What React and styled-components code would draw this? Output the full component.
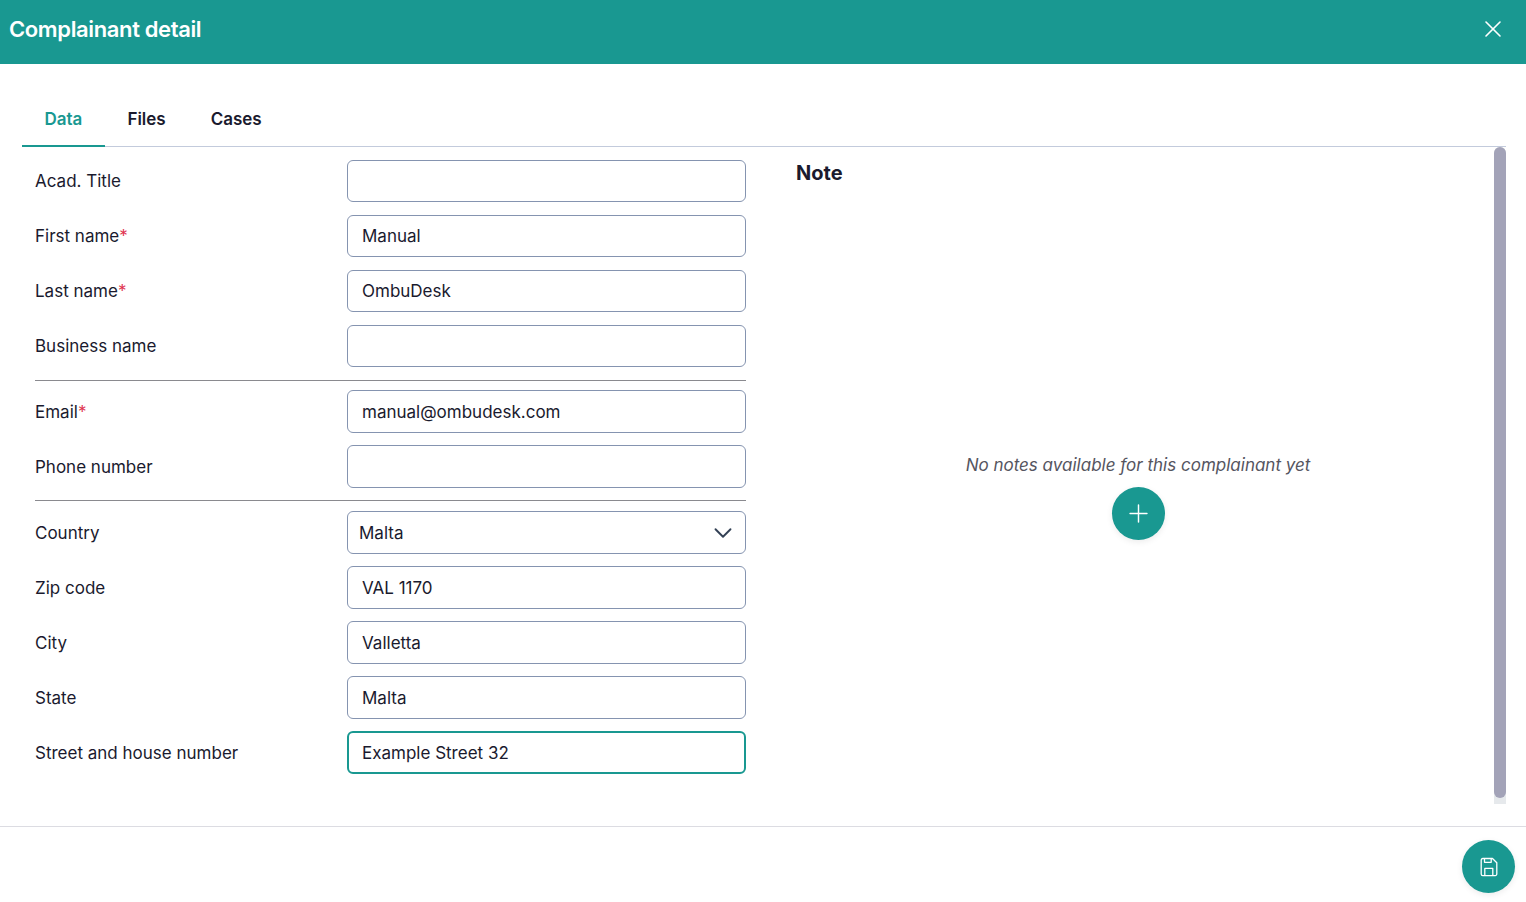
import React from "react";
import styled, { createGlobalStyle } from "styled-components";
import { X, Plus, ChevronDown } from "lucide-react";

const GlobalStyle = createGlobalStyle`
    html, body {
        margin: 0;
        padding: 0;
        background: #fff;
    }
    body {
        font-family: Inter, "Noto Sans", sans-serif;
        color: #1a1a2e;
        overflow: hidden;
    }
    * {
        box-sizing: border-box;
    }
`;

const TEAL = "#199891";

const Page = styled.div`
    width: 1526px;
    height: 902px;
    display: flex;
    flex-direction: column;
    background: #fff;
`;

const Header = styled.header`
    height: 64px;
    flex: none;
    display: flex;
    align-items: center;
    justify-content: space-between;
    padding: 0 19px 6px 9px;
    background: ${TEAL};
    color: #fff;
`;

const Title = styled.h1`
    margin: 0;
    font-size: 22px;
    line-height: 28px;
    font-weight: 600;
    letter-spacing: -0.37px;
`;

const CloseButton = styled.button`
    width: 28px;
    height: 28px;
    padding: 0;
    border: 0;
    background: none;
    color: #fff;
    display: flex;
    align-items: center;
    justify-content: center;
`;

const Content = styled.div`
    height: 763px;
    flex: none;
    padding: 28px 20px 0 22px;
    border-bottom: 1px solid #dcdce2;
`;

const Tabs = styled.nav`
    height: 55px;
    display: flex;
    border-bottom: 1px solid #c3cbdc;
`;

const Tab = styled.div`
    height: 55px;
    padding: 0 22.5px;
    display: flex;
    align-items: center;
    font-size: 17px;
    font-weight: 600;
    color: ${({ $active }) => ($active ? TEAL : "#1a1a2e")};
    border-bottom: 2px solid ${({ $active }) => ($active ? TEAL : "transparent")};
`;

const Body = styled.div`
    height: 657px;
    display: flex;
`;

const FormColumn = styled.form`
    width: 724px;
    flex: none;
    padding: 13px 0 0 13px;
`;

const FieldGroup = styled.div`
    display: grid;
    grid-auto-rows: ${({ $rowHeight }) => $rowHeight}px;
    row-gap: ${({ $gap }) => $gap}px;
`;

const Divider = styled.hr`
    margin: ${({ $top }) => $top}px 0 ${({ $bottom }) => $bottom}px;
    border: 0;
    border-top: 1px solid #8a8a8f;
`;

const Row = styled.label`
    display: grid;
    grid-template-columns: 312px 399px;
    align-items: center;
    font-size: 17px;
    color: #1a1a2e;
`;

const Required = styled.span`
    color: #e0344f;
`;

const Input = styled.input`
    width: 100%;
    align-self: stretch;
    padding: 0 ${({ $focused }) => ($focused ? 13 : 14)}px;
    border: ${({ $focused }) => ($focused ? `2px solid ${TEAL}` : "1px solid #8594b0")};
    border-radius: 6px;
    background: #fff;
    outline: none;
    font-family: inherit;
    font-size: 17px;
    color: #1a1a2e;
`;

const SelectBox = styled.div`
    align-self: stretch;
    display: flex;
    align-items: center;
    justify-content: space-between;
    padding: 0 7px 0 11px;
    border: 1px solid #8594b0;
    border-radius: 6px;
    color: #1a1a2e;
`;

const NoteColumn = styled.section`
    flex: 1;
    padding: 14px 0 0 50px;
    display: flex;
    flex-direction: column;
`;

const NoteTitle = styled.h2`
    margin: 0;
    font-size: 20px;
    line-height: 24px;
    font-weight: 700;
    color: #1a1a2e;
`;

const EmptyNotes = styled.div`
    margin-top: 269px;
    display: flex;
    flex-direction: column;
    align-items: center;
    gap: 11px;
    padding-right: 14px;
`;

const EmptyText = styled.p`
    margin: 0;
    font-size: 17px;
    line-height: 22px;
    font-style: italic;
    color: #55555f;
`;

const RoundButton = styled.button`
    width: 53px;
    height: 53px;
    flex: none;
    padding: 0;
    border: 0;
    border-radius: 50%;
    background: ${TEAL};
    color: #fff;
    display: flex;
    align-items: center;
    justify-content: center;
    box-shadow: 0 2px 6px rgba(0, 0, 0, 0.08);
`;

const ScrollTrack = styled.div`
    width: 12px;
    height: 657px;
    flex: none;
    background: #e6e9ec;
    border-radius: 6px 6px 0 0;
`;

const ScrollThumb = styled.div`
    height: 651px;
    background: #a3a3b8;
    border-radius: 6px;
`;

const Footer = styled.footer`
    flex: 1;
    display: flex;
    justify-content: flex-end;
    padding: 13px 11px 0 0;
`;

const SaveIcon = () => (
    <svg width="20" height="20" viewBox="0 0 20 20" fill="none" stroke="currentColor" strokeWidth="1.3" strokeLinejoin="round">
        <path d="M3.7 1.5h9.8l4.3 4.3v11.2a1.6 1.6 0 0 1-1.6 1.6H3.8a1.6 1.6 0 0 1-1.6-1.6V3.1a1.6 1.6 0 0 1 1.5-1.6z" />
        <path d="M5.5 1.5v3.8h6.7V1.5" />
        <path d="M5.8 18.6v-7.2h8v7.2" />
    </svg>
);

const firstGroup = [
    { label: "Acad. Title", value: "" },
    { label: "First name", value: "Manual", required: true },
    { label: "Last name", value: "OmbuDesk", required: true },
    { label: "Business name", value: "" },
];

const contactGroup = [
    { label: "Email", value: "manual@ombudesk.com", required: true },
    { label: "Phone number", value: "" },
];

const addressGroup = [
    { label: "Zip code", value: "VAL 1170" },
    { label: "City", value: "Valletta" },
    { label: "State", value: "Malta" },
    { label: "Street and house number", value: "Example Street 32", focused: true },
];

const Field = ({ label, value, required, focused }) => (
    <Row>
        <span>
            {label}
            {required && <Required>*</Required>}
        </span>
        <Input defaultValue={value} $focused={focused} />
    </Row>
);

export default function App() {
    return (
        <Page>
            <GlobalStyle />
            <Header>
                <Title>Complainant detail</Title>
                <CloseButton>
                    <X size={28} strokeWidth={1.4} />
                </CloseButton>
            </Header>
            <Content>
                <Tabs>
                    <Tab $active>Data</Tab>
                    <Tab>Files</Tab>
                    <Tab>Cases</Tab>
                </Tabs>
                <Body>
                    <FormColumn>
                        <FieldGroup $rowHeight={42} $gap={13}>
                            {firstGroup.map((f) => (
                                <Field key={f.label} {...f} />
                            ))}
                        </FieldGroup>
                        <Divider $top={13} $bottom={9} />
                        <FieldGroup $rowHeight={43} $gap={12}>
                            {contactGroup.map((f) => (
                                <Field key={f.label} {...f} />
                            ))}
                        </FieldGroup>
                        <Divider $top={12} $bottom={10} />
                        <FieldGroup $rowHeight={43} $gap={12}>
                            <Row>
                                <span>Country</span>
                                <SelectBox>
                                    Malta
                                    <ChevronDown size={30} strokeWidth={1.5} color="#334155" />
                                </SelectBox>
                            </Row>
                            {addressGroup.map((f) => (
                                <Field key={f.label} {...f} />
                            ))}
                        </FieldGroup>
                    </FormColumn>
                    <NoteColumn>
                        <NoteTitle>Note</NoteTitle>
                        <EmptyNotes>
                            <EmptyText>No notes available for this complainant yet</EmptyText>
                            <RoundButton>
                                <Plus size={29} strokeWidth={1.2} />
                            </RoundButton>
                        </EmptyNotes>
                    </NoteColumn>
                    <ScrollTrack>
                        <ScrollThumb />
                    </ScrollTrack>
                </Body>
            </Content>
            <Footer>
                <RoundButton>
                    <SaveIcon />
                </RoundButton>
            </Footer>
        </Page>
    );
}
